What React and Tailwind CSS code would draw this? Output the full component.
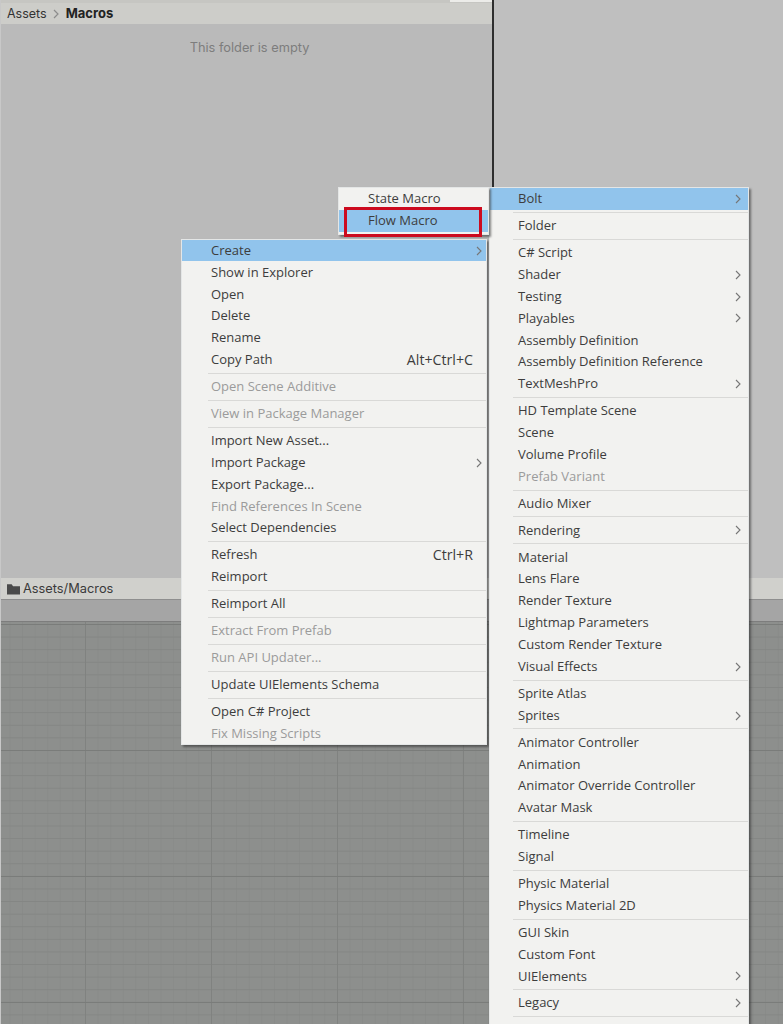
const MAIN_MENU = [
  { label: "Create", arrow: true, active: true },
  { label: "Show in Explorer" },
  { label: "Open" },
  { label: "Delete" },
  { label: "Rename" },
  { label: "Copy Path", shortcut: "Alt+Ctrl+C", sep: true },
  { label: "Open Scene Additive", off: true, sep: true },
  { label: "View in Package Manager", off: true, sep: true },
  { label: "Import New Asset..." },
  { label: "Import Package", arrow: true },
  { label: "Export Package..." },
  { label: "Find References In Scene", off: true },
  { label: "Select Dependencies", sep: true },
  { label: "Refresh", shortcut: "Ctrl+R" },
  { label: "Reimport", sep: true },
  { label: "Reimport All", sep: true },
  { label: "Extract From Prefab", off: true, sep: true },
  { label: "Run API Updater...", off: true, sep: true },
  { label: "Update UIElements Schema", sep: true },
  { label: "Open C# Project" },
  { label: "Fix Missing Scripts", off: true },
];

const CREATE_MENU = [
  { label: "Bolt", arrow: true, active: true, sep: true },
  { label: "Folder", sep: true },
  { label: "C# Script" },
  { label: "Shader", arrow: true },
  { label: "Testing", arrow: true },
  { label: "Playables", arrow: true },
  { label: "Assembly Definition" },
  { label: "Assembly Definition Reference" },
  { label: "TextMeshPro", arrow: true, sep: true },
  { label: "HD Template Scene" },
  { label: "Scene" },
  { label: "Volume Profile" },
  { label: "Prefab Variant", off: true, sep: true },
  { label: "Audio Mixer", sep: true },
  { label: "Rendering", arrow: true, sep: true },
  { label: "Material" },
  { label: "Lens Flare" },
  { label: "Render Texture" },
  { label: "Lightmap Parameters" },
  { label: "Custom Render Texture" },
  { label: "Visual Effects", arrow: true, sep: true },
  { label: "Sprite Atlas" },
  { label: "Sprites", arrow: true, sep: true },
  { label: "Animator Controller" },
  { label: "Animation" },
  { label: "Animator Override Controller" },
  { label: "Avatar Mask", sep: true },
  { label: "Timeline" },
  { label: "Signal", sep: true },
  { label: "Physic Material" },
  { label: "Physics Material 2D", sep: true },
  { label: "GUI Skin" },
  { label: "Custom Font" },
  { label: "UIElements", arrow: true, sep: true },
  { label: "Legacy", arrow: true, sep: true },
];

const BOLT_MENU = [{ label: "State Macro" }, { label: "Flow Macro", active: true }];

function Chevron({ wide }) {
  return (
    <svg
      width="6"
      height="10"
      viewBox="0 0 6 10"
      className={`absolute top-[6px] ${wide ? "right-[7px]" : "right-[4px]"}`}
      fill="none"
    >
      <path d="M1 1l4 4-4 4" stroke="#767676" strokeWidth="1.1" />
    </svg>
  );
}

function MenuRow({ item, wide }) {
  return (
    <>
      <div
        className={`relative flex h-[21.9px] items-center justify-between pr-[13px] ${wide ? "pl-[28px]" : "pl-[29px]"} ${
          item.active ? "bg-[#91c4ec]" : ""
        } ${item.off ? "text-[#9b9b9b]" : "text-[#3d3d3d]"}`}
      >
        <span className="whitespace-nowrap">{item.label}</span>
        {item.shortcut ? <span className="whitespace-nowrap text-[14.2px]">{item.shortcut}</span> : null}
        {item.arrow ? <Chevron wide={wide} /> : null}
      </div>
      {item.sep ? (
        <div className={`flex h-[5px] items-center ${wide ? "pl-[23px]" : "pl-[26px]"}`}>
          <div className="h-px w-full bg-[#d9d9d7]" />
        </div>
      ) : null}
    </>
  );
}

function Menu({ items, wide, className }) {
  return (
    <div
      className={`absolute border border-[#e4e6e6] bg-[#f2f2f0] text-[13px] font-['Open_Sans','Noto_Sans',sans-serif] shadow-[2px_2px_2px_rgba(40,40,40,0.55)] ${className}`}
    >
      {items.map((item) => (
        <MenuRow key={item.label} item={item} wide={wide} />
      ))}
    </div>
  );
}

export default function App() {
  return (
    <div className="relative h-[1024px] w-[783px] overflow-hidden border-l border-[#c8c8c8] bg-[#8d8f8d] font-['Inter','Noto_Sans',sans-serif]">
      <div className="flex h-[578px]">
        <div className="flex w-[491px] flex-col bg-[#bababa]">
          <div className="flex h-[3px] justify-end bg-[#c6c6c2]">
            <div className="h-[2px] w-[42px] bg-[#ecece9]" />
          </div>
          <div className="flex h-[21px] items-center gap-[6px] bg-[#cdcdc9] pt-[1px] pl-[6px] text-[12.5px] text-[#333333]">
            <span>Assets</span>
            <svg width="7" height="10" viewBox="0 0 7 10" fill="none">
              <path d="M1 1l4 4-4 4" stroke="#8c8c8c" strokeWidth="1.2" />
            </svg>
            <span className="text-[13px] font-bold text-[#222222]">Macros</span>
          </div>
          <div className="pt-[14px] pl-[6px] text-center text-[12.8px] text-[#7d7d7d]">This folder is empty</div>
        </div>
        <div className="w-[2px] bg-[#2e2e2e]" />
        <div className="flex-1 bg-[#bfbfbf]" />
      </div>
      <div className="flex h-[22px] items-center gap-[3px] border-b border-[#8e8e8e] bg-[#d0d0cc] pt-[1px] pl-[6px] text-[12.8px] text-[#3a3a3a]">
        <svg width="13" height="12" viewBox="0 0 14 12">
          <path d="M0 1h5l1.5 2H14v9H0z" fill="#4a4a4a" />
        </svg>
        <span>Assets/Macros</span>
      </div>
      <div className="h-[22px] border-b border-[#7d7d7d] bg-[#a5a5a5]" />
      <div className="h-[402px] bg-[linear-gradient(#7a7c7a_1px,transparent_1px),linear-gradient(90deg,#808280_1px,transparent_1px),linear-gradient(#848684_1px,transparent_1px),linear-gradient(90deg,#898b89_1px,transparent_1px)] bg-[size:126px_126px,126px_126px,12.6px_12.6px,12.6px_12.6px] bg-[position:84px_2px,84px_2px,84px_2px,84px_2px]" />

      <Menu items={MAIN_MENU} className="left-[180px] top-[238.6px] w-[306px]" />
      <Menu items={CREATE_MENU} wide className="left-[488px] top-[187px] h-[860px] w-[260px]" />
      <Menu items={BOLT_MENU} className="left-[337px] top-[187px] h-[48px] w-[151px]" />
      <div className="absolute left-[343px] top-[207px] h-[30px] w-[138px] border-[3px] border-[#cc0a1e]" />
    </div>
  );
}
